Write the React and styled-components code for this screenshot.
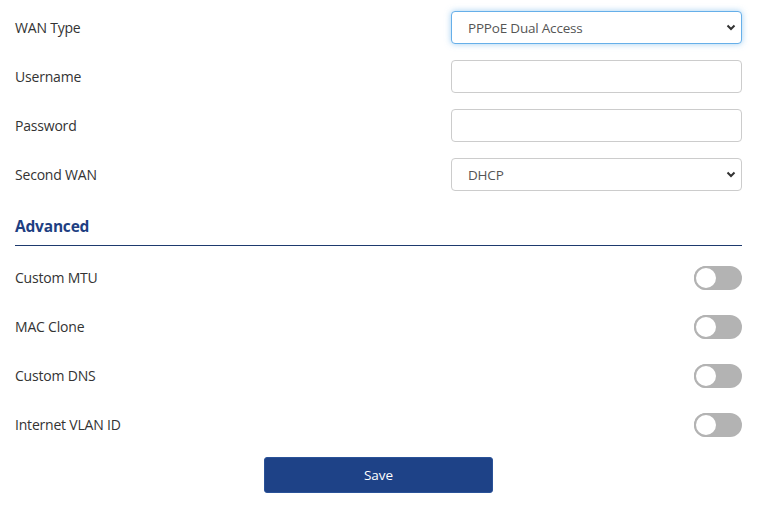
import styled, { createGlobalStyle } from "styled-components";

const GlobalStyle = createGlobalStyle`
  body {
    margin: 0;
    background: #fff;
    font-family: "Open Sans", "Noto Sans", sans-serif;
  }
`;

const Page = styled.div`
  width: 727px;
  padding: 11px 0 0 15px;
  display: flex;
  flex-direction: column;
`;

const Row = styled.div`
  display: flex;
  align-items: center;
  justify-content: space-between;
  height: 33px;
  margin-bottom: 16px;
`;

const Label = styled.div`
  font-size: 14px;
  line-height: 31px;
  color: #333;
  letter-spacing: -0.2px;
`;

const Field = styled.div`
  position: relative;
  width: 291px;
  height: 33px;
`;

const Input = styled.input`
  box-sizing: border-box;
  width: 100%;
  height: 100%;
  border: 1px solid #ccc;
  border-radius: 4px;
  padding: 0 16px;
  font-family: inherit;
  font-size: 13.5px;
  color: #555;
  outline: none;
`;

const Select = styled.select`
  box-sizing: border-box;
  width: 100%;
  height: 100%;
  appearance: none;
  background: #fff;
  border: 1px solid ${(p) => (p.$focused ? "#66afe9" : "#ccc")};
  box-shadow: ${(p) =>
    p.$focused ? "0 0 6px rgba(102, 175, 233, 0.6)" : "none"};
  border-radius: 4px;
  padding: 0 16px;
  font-family: inherit;
  font-size: 13.5px;
  letter-spacing: -0.2px;
  color: #555;
  outline: none;
`;

const Chevron = styled.svg`
  position: absolute;
  right: 6px;
  top: 13px;
  pointer-events: none;
`;

const SectionTitle = styled.div`
  margin-top: 8px;
  font-size: 15.5px;
  font-weight: 700;
  color: #1e3f82;
  letter-spacing: -0.2px;
  padding-bottom: 8px;
  border-bottom: 1px solid #1e3a6e;
  margin-bottom: 15px;
`;

const ToggleRow = styled(Row)`
  height: 33px;
  margin-bottom: 16px;

  &:last-of-type {
    margin-bottom: 15px;
  }
`;

const Track = styled.div`
  position: relative;
  width: 48px;
  height: 24px;
  border-radius: 12px;
  background: #b3b3b3;
`;

const Knob = styled.div`
  position: absolute;
  left: 0;
  top: 0;
  box-sizing: border-box;
  width: 24px;
  height: 24px;
  border-radius: 50%;
  background: #fff;
  border: 2px solid #b3b3b3;
`;

const Footer = styled.div`
  display: flex;
  justify-content: center;
`;

const SaveButton = styled.button`
  width: 229px;
  height: 36px;
  background: #1e4287;
  border: 1px solid #2a5298;
  border-radius: 3px;
  color: #fff;
  font-family: inherit;
  font-size: 13.5px;
`;

function ChevronIcon() {
  return (
    <Chevron width="10" height="7" viewBox="0 0 10 7">
      <path d="M1.5 1.5 L5 5 L8.5 1.5" fill="none" stroke="#333" strokeWidth="2" />
    </Chevron>
  );
}

function Toggle() {
  return (
    <Track>
      <Knob />
    </Track>
  );
}

export default function App() {
  const toggles = ["Custom MTU", "MAC Clone", "Custom DNS", "Internet VLAN ID"];
  return (
    <>
      <GlobalStyle />
      <Page>
        <Row>
          <Label>WAN Type</Label>
          <Field>
            <Select $focused defaultValue="pppoe-dual">
              <option value="pppoe-dual">PPPoE Dual Access</option>
            </Select>
            <ChevronIcon />
          </Field>
        </Row>
        <Row>
          <Label>Username</Label>
          <Field>
            <Input type="text" />
          </Field>
        </Row>
        <Row>
          <Label>Password</Label>
          <Field>
            <Input type="password" />
          </Field>
        </Row>
        <Row>
          <Label>Second WAN</Label>
          <Field>
            <Select defaultValue="dhcp">
              <option value="dhcp">DHCP</option>
            </Select>
            <ChevronIcon />
          </Field>
        </Row>
        <SectionTitle>Advanced</SectionTitle>
        {toggles.map((t) => (
          <ToggleRow key={t}>
            <Label>{t}</Label>
            <Toggle />
          </ToggleRow>
        ))}
        <Footer>
          <SaveButton>Save</SaveButton>
        </Footer>
      </Page>
    </>
  );
}
